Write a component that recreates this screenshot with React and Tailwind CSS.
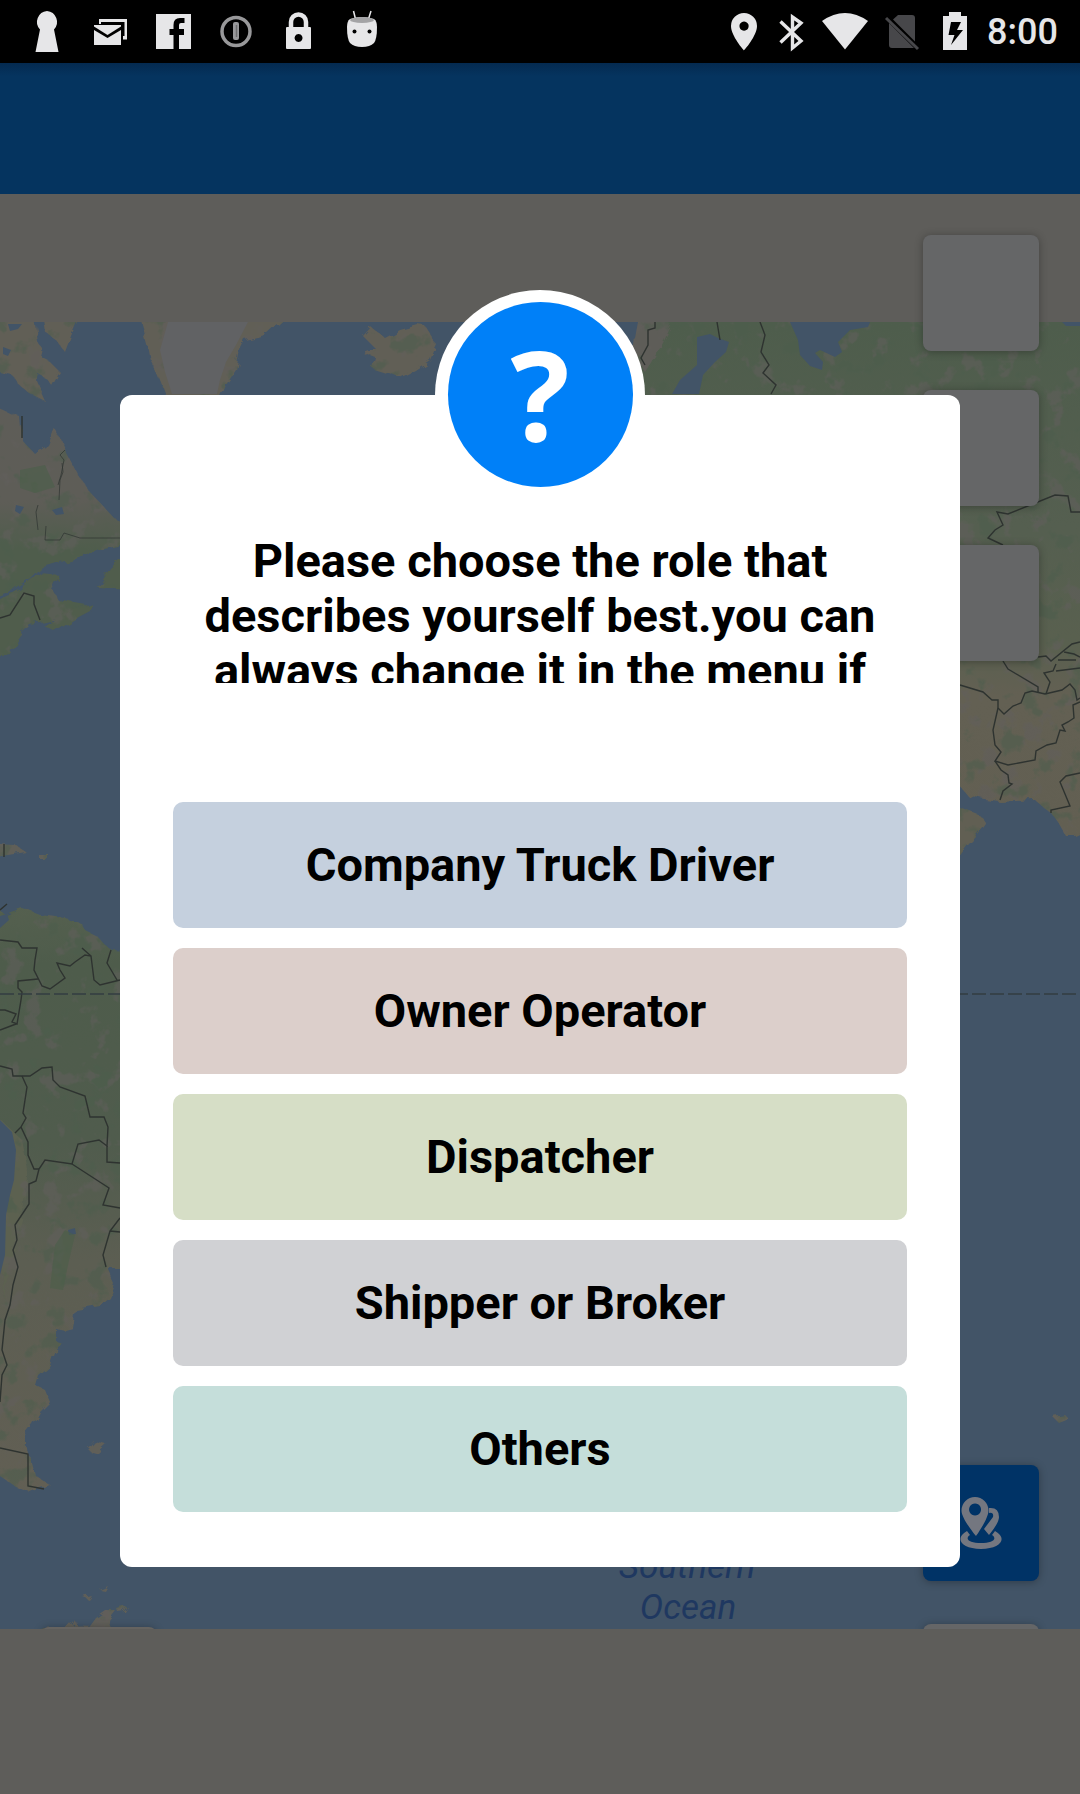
import React from "react";

const roles = [
  { label: "Company Truck Driver", color: "bg-[#c5d0de]" },
  { label: "Owner Operator", color: "bg-[#dccfcb]" },
  { label: "Dispatcher", color: "bg-[#d6dec6]" },
  { label: "Shipper or Broker", color: "bg-[#d0d1d4]" },
  { label: "Others", color: "bg-[#c5deda]" },
];

function Glyph({ x, w, children }) {
  return (
    <svg width={w} height="63" viewBox={`${x} 0 ${w} 63`} fill="#e6e6e8" aria-hidden="true">
      {children}
    </svg>
  );
}

function StatusBar() {
  return (
    <div className="flex h-[63px] w-full items-center justify-between bg-black pr-[22px] pl-4">
      <div className="flex">
        <Glyph x={16} w={63}>
          <path d="M47 11a11 11 0 0 1 7 18.500L58.500 52h-23L40 29.500A11 11 0 0 1 47 11Z" />
        </Glyph>
        <Glyph x={79} w={63}>
          <path d="M99 19h28v20.500h-4V36h1.500V22H101v2h-2Z" />
          <path d="M94 25h27v1.500L107.500 35 94 26.500Z" />
          <path d="M94 30l13.500 8L121 30v15H94Z" />
        </Glyph>
        <Glyph x={142} w={63}>
          <path d="M156 14h35v35h-12V35h5v-6h-5v-4q0-2 2-2h3.500v-5H180q-6.500 0-6.500 7v4h-4v6h4v14H156Z" />
        </Glyph>
        <Glyph x={205} w={63}>
          <circle cx="236" cy="31.500" r="14" fill="none" stroke="#98989a" strokeWidth="3.500" />
          <rect x="233" y="22" width="6" height="18" rx="2" fill="#98989a" />
          <path d="M236.500 25v12" stroke="#6c6c6e" strokeWidth="1.500" />
        </Glyph>
        <Glyph x={268} w={63}>
          <path d="M291 28v-6a7.500 7.500 0 0 1 15 0v6" fill="none" stroke="#e6e6e8" strokeWidth="4.500" />
          <path fillRule="evenodd" d="M287 27h23q1 0 1 1v20q0 1-1 1h-23q-1 0-1-1V28q0-1 1-1Zm11.500 7a4 4 0 1 0 .1 0Z" />
        </Glyph>
        <Glyph x={331} w={63}>
          <path d="M353.500 11l2 8M371 11l-2.500 8" stroke="#e6e6e8" strokeWidth="1.500" />
          <path d="M347 27q0-6 3-8 12-4 24 0 3 2 3 8 0 12-3 16-4 4-12 4t-12-4q-3-4-3-16Z" />
          <ellipse cx="362" cy="20" rx="12" ry="3" fill="#a3a3a5" />
          <circle cx="354.500" cy="31.500" r="2" fill="#000" />
          <circle cx="369.500" cy="31.500" r="2" fill="#000" />
        </Glyph>
      </div>
      <div className="flex items-center">
        <Glyph x={722} w={44}>
          <path fillRule="evenodd" d="M744 13a13 13 0 0 1 13 13c0 10-13 24.500-13 24.500S731 36 731 26a13 13 0 0 1 13-13Zm0 8.500a4.600 4.600 0 1 0 .1 0Z" />
        </Glyph>
        <Glyph x={766} w={52}>
          <path d="M780.500 21.500L801 41l-8.500 7V17l8.500 6-20.500 19.500" fill="none" stroke="#e6e6e8" strokeWidth="3.400" />
        </Glyph>
        <Glyph x={818} w={54}>
          <path d="M822 21q23-16 46 0L845 49.500Z" />
        </Glyph>
        <Glyph x={872} w={58}>
          <path d="M898 15h14q3 0 3 3v23.500L893 19.500ZM889 23l25 25h-22q-3 0-3-3Z" fill="#47474a" />
          <path d="M886 18l32 31" stroke="#47474a" strokeWidth="3" />
        </Glyph>
        <Glyph x={930} w={50}>
          <path fillRule="evenodd" d="M949 12h12v4h6v34h-24V16h6Zm2 10l-2.500 13h6L951 45l12-15h-6l4-8Z" />
        </Glyph>
        <time className="w-[78px] pl-[7px] text-[36px] leading-none font-medium text-[#e6e6e8]">8:00</time>
      </div>
    </div>
  );
}

function WorldMap() {
  return (
    <svg className="block h-auto w-full" viewBox="0 322 1080 1307" aria-label="World map" role="img">
      <defs>
        <filter id="coast" x="0" y="0" width="100%" height="100%" colorInterpolationFilters="sRGB">
          <feTurbulence type="fractalNoise" baseFrequency="0.080" numOctaves="3" seed="4" result="n" />
          <feDisplacementMap in="SourceGraphic" in2="n" scale="9" result="land" />
          <feTurbulence type="fractalNoise" baseFrequency="0.045" numOctaves="4" seed="9" result="m" />
          <feColorMatrix in="m" values="0 0 0 0 0.380  0 0 0 0 0.370  0 0 0 0 0.360  9 0 0 0 -5.2" result="grey" />
          <feColorMatrix in="m" values="0 0 0 0 0.300  0 0 0 0 0.365  0 0 0 0 0.300  0 8 0 0 -4.7" result="green" />
          <feMerge result="spots">
            <feMergeNode in="grey" />
            <feMergeNode in="green" />
          </feMerge>
          <feComponentTransfer in="spots" result="soft">
            <feFuncA type="linear" slope="0.550" />
          </feComponentTransfer>
          <feComposite in="soft" in2="land" operator="atop" />
        </filter>
        <linearGradient id="america" x1="0" y1="905" x2="0" y2="1500" gradientUnits="userSpaceOnUse">
          <stop offset="0" stopColor="#55604f" />
          <stop offset="0.100" stopColor="#4e5c4b" />
          <stop offset="0.400" stopColor="#505c4d" />
          <stop offset="0.600" stopColor="#5c5e52" />
          <stop offset="1" stopColor="#625f54" />
        </linearGradient>
        <linearGradient id="canada" x1="0" y1="400" x2="0" y2="600" gradientUnits="userSpaceOnUse">
          <stop offset="0" stopColor="#5e5d58" />
          <stop offset="0.500" stopColor="#5e5d57" />
          <stop offset="0.750" stopColor="#4f5d4c" />
          <stop offset="1" stopColor="#4f5d4c" />
        </linearGradient>
        <linearGradient id="asia" x1="0" y1="322" x2="0" y2="840" gradientUnits="userSpaceOnUse">
          <stop offset="0" stopColor="#4e5d4c" />
          <stop offset="0.400" stopColor="#555f50" />
          <stop offset="0.620" stopColor="#59604f" />
          <stop offset="0.720" stopColor="#636053" />
          <stop offset="1" stopColor="#625f52" />
        </linearGradient>
      </defs>
      <rect x="0" y="322" width="1080" height="1307" fill="#425467" />

      <g filter="url(#coast)">
        <g fill="#615f56">
          <path d="M-9 312H33L38 342 44 350 42 358 50 362 60 372 52 386 46 378 38 374 36 380 46 402 30 394 18 384 12 375-9 370Z" />
          <path d="M42 312H80L70 335 64 351 56 340 45 332Z" />
          <path d="M138 312H290L265 335 245 340 240 350 236 370 226 385 220 400H168L158 375 150 360 147 345Z" />
          <path d="M362 335L370 326 385 338 400 330 418 325 425 326 437 345 430 360 415 370 400 378 385 372 372 368 375 357 362 352 375 348Z" />
        </g>
        <path fill="url(#canada)" d="M-9 404L15 415 20 417 22 440 35 454 48 445 55 428 60 438 65 450 78 475 82 480 90 492 105 508 114 518 130 524V543L100 550 80 558 60 562 40 568 30 578 15 588-9 597Z" />
        <path fill="#505d4c" d="M-9 602L20 588 40 573 60 575 52 590 58 600 75 603 86 605 70 612 60 618 46 622 30 625 20 635 10 650 12 654-9 656Z" />
        <path fill="#505d4c" d="M45 627L60 615 75 609 92 603 90 611 75 619 55 632ZM98 588L110 568 130 550V590Z" />
        <path fill="url(#asia)" d="M640 312H1100V825L1075 836 1066 836 1058 822 1052 814 1035 800 1000 802 985 800 968 796 955 780 900 700V500L620 420Z" />
        <path fill="#5e5d58" d="M635 312H678L662 345 645 372 630 350Z" />
        <path fill="#615f53" d="M940 800L970 811 980 815 986 824 978 835 968 845 955 862Z" />
        <path fill="url(#america)" d="M-9 905L5 914 22 908 40 915 65 918 80 922 85 930 97 936 105 945 112 950 140 952V1268H107L115 1285 110 1298 100 1306 76 1310 73 1328 65 1330 55 1328 55 1340 63 1345 54 1352 50 1365 38 1375 35 1385 45 1390 50 1402 40 1412 33 1425 25 1435 25 1445 30 1455 35 1475 50 1485 40 1488 30 1492 15 1486-9 1470Z" />
        <g fill="#605f58">
          <path d="M-4 844L15 845 26 852-4 857ZM38 854h10v4h-10ZM88 1450L95 1442 107 1445 98 1453ZM1052 1416l12-2 4 4-10 4ZM100 1590l8-4-3 5ZM84 1598l8-2-3 4ZM84 1632L95 1617 105 1610 115 1610 108 1619 112 1632ZM118 1610l10-3-3 5-6 1ZM70 1632l6-11 3 11Z" />
          <path d="M40 1629q30-6 72-2v6H40Z" />
        </g>
        <path fill="#5c6150" d="M1 1120L22 1140 28 1170 22 1220 10 1260 4 1300 0 1190Z" />
      </g>

      <path fill="#616264" d="M168 322H248L236 345 226 362 220 380 217 394H172L165 372 160 350Z" />
      <g fill="#425467">
        <path d="M697 337L710 334 718 338 729 342 726 352 715 362 703 375 699 394H672L680 380 697 365Z" />
        <path d="M790 322H870L868 327 850 330 838 342 842 352 835 357 820 350 815 353 823 362 822 370 810 366 800 355 798 340Z" />
        <path d="M0 1120L12 1132 16 1150 14 1180 10 1195 6 1215 5 1255 0 1275ZM0 916l7-2 2 6-9 8Z" />
        <path d="M8 324l14 0-4 5-8 2ZM3 347l8 3-3 6-5-2ZM16 505l8 2-4 7-5-3ZM52 510l10-3 2 7-8 1ZM1062 322h18v4h-14ZM68 1230l7-2 1 6-7 1ZM620 322h18l-3 16-6 6Z" />
      </g>
      <path fill="#4b5f4a" opacity="0.600" d="M55 1245l10-15 10 5-7 30-5 25-13-2ZM20 470l25-5 10 22-20 6-15-5Z" />

      <g fill="none" stroke="#2e3330" strokeWidth="1.400">
        <path d="M655 322V328L648 330V345L641 358 645 365M717 322L720 340M760 322L765 335 761 352 769 365 763 373 776 385 771 394" />
        <path d="M1003 545L988 538 995 530 1003 525 997 512 1008 514 1055 495 1068 496 1071 512H1080" />
        <path d="M1003 661L1008 669 1038 687V693M1038 657L1046 656 1051 661 1072 644 1080 642M1064 652l10 2 6 3M1058 660h18M1056 671l24-3" />
        <path d="M960 685L983 692 992 700H998V708L1004 714 1013 706 1021 703 1025 693 1032 691 1045 694 1062 690 1070 684 1075 690 1077 700 1080 698" />
        <path d="M998 708L993 730 995 745 1001 752 995 761 1008 765 1035 760 1036 751 1047 745 1056 743 1060 730 1065 731 1062 725 1068 722 1074 718 1073 705 1080 702" />
        <path d="M995 761L1001 770 1008 775 1009 783 1012 784 1003 791 1000 800M1080 773L1066 776 1060 782 1070 806 1051 810V813M1046 694L1050 682 1044 673 1053 671 1056 664" />
        <path d="M0 618L10 615 24 593 34 596V604L40 620M22 416V438" />
        <path strokeWidth="0.700" d="M65 450L60 455 64 460 61 475 58 485M62 463L63 472 60 480 59 500M38 505L36 512 38 530M46 526L45 540H60L64 533 80 538H120" />
        <path d="M0 940L18 942 22 948H37L35 960 34 970 38 978 42 986 50 989 65 978 60 970 57 963 70 966 75 962 85 955 91 956 94 980 100 985 120 980M91 956L82 948M111 950L107 963 117 980" />
        <path d="M38 979L18 981V988L22 992 21 1000 17 1024 12 1022 16 1014 5 1010H0M0 1030L16 1024" />
        <path d="M0 1066L12 1069 13 1076H30L42 1068 52 1067 53 1080 60 1087 85 1096 90 1117H104L108 1127 107 1146 99 1140 78 1144 72 1164 45 1160 39 1169 36 1181 29 1184V1204L15 1225 17 1240 13 1250 18 1267 13 1285 10 1305 5 1320 2 1350 7 1365 2 1375 0 1402" />
        <path d="M22 1076L27 1087 23 1113 26 1118 21 1127 28 1142V1155L34 1169H39M21 1127L15 1133M107 1146V1162L120 1163M72 1164L109 1188 103 1205 120 1208M120 1218L110 1231 103 1255 106 1267M110 1231L120 1232" />
        <path d="M0 1448L28 1454V1486L44 1489M4 844V857M0 910L7 904" />
      </g>
      <path d="M0 994H1080" stroke="#333d42" strokeWidth="1.400" strokeDasharray="14 4" />

      <g fill="#1f3860" fontFamily="Roboto, sans-serif" fontStyle="italic" fontSize="35" textAnchor="middle">
        <text x="687" y="1578">Southern</text>
        <text x="688" y="1619">Ocean</text>
      </g>
    </svg>
  );
}

const controlStyle = "block h-[116px] w-[116px] rounded-lg shadow-[0_1px_8px_rgba(0,0,0,0.3)]";

function MapPane() {
  return (
    <div className="relative overflow-hidden pt-32">
      <WorldMap />
      <div className="absolute top-[41px] right-[41px] flex flex-col gap-[39px]">
        <button aria-label="Map layers" className={`${controlStyle} bg-[#656667]`} />
        <button aria-label="Map filters" className={`${controlStyle} bg-[#656667]`} />
        <button aria-label="Map search" className={`${controlStyle} bg-[#656667]`} />
      </div>
      <div className="absolute right-[41px] -bottom-[111px] flex flex-col gap-[43px]">
        <button aria-label="Nearby places" className={`${controlStyle} flex items-center justify-center bg-[#003366]`}>
          <svg width="48" height="52" viewBox="-2 0 44 52" preserveAspectRatio="xMinYMid" fill="#747780" aria-hidden="true">
            <path d="M8 34C-5 41 2 52 22 52S49 41 36 34l-3 4c6 4 0 8-11 8S5 42 11 38Z" />
            <path d="M30 11q10-1 10 9 0 6-10 18l-5-6 9-12q1-5-4-4Z" />
            <path fillRule="evenodd" d="M16 0a13.500 13.500 0 0 1 13.500 13.500C29.500 22 17 39 17 39S2.500 22 2.500 13.500A13.500 13.500 0 0 1 16 0Zm0 6.500a6 6 0 1 0 .1 0Z" />
          </svg>
        </button>
        <button aria-label="Locate me" className={`${controlStyle} bg-[#656667]`} />
      </div>
      <button aria-label="Menu" className={`${controlStyle} absolute -bottom-[114px] left-[41px] bg-[#656360]`} />
    </div>
  );
}

function RoleDialog() {
  return (
    <div
      role="dialog"
      aria-modal="true"
      aria-labelledby="role-title"
      className="relative mt-[105px] w-7/9 rounded-xl bg-white px-[53px] pt-[138px] pb-[55px]"
    >
      <div className="absolute -top-[105px] left-1/2 flex h-[210px] w-[210px] -translate-x-1/2 items-center justify-center rounded-full bg-white">
        <div className="flex h-[185px] w-[185px] items-center justify-center rounded-full bg-[#0080f8] pb-1">
          <span className="font-['Open_Sans'] text-[124px] leading-none font-bold text-white">?</span>
        </div>
      </div>
      <h1 id="role-title" className="h-[150px] overflow-hidden text-center text-[47px] leading-[55px] font-bold text-black">
        Please choose the role that describes yourself best.you can always change it in the menu if
      </h1>
      <div className="mt-[119px] flex flex-col gap-5">
        {roles.map((role) => (
          <button
            key={role.label}
            className={`h-[126px] w-full rounded-[10px] text-[47px] leading-[55px] font-bold text-black ${role.color}`}
          >
            {role.label}
          </button>
        ))}
      </div>
    </div>
  );
}

export default function App() {
  return (
    <div className="relative flex min-h-screen w-full flex-col bg-[#5e5d5a] font-[Roboto,sans-serif]">
      <StatusBar />
      <header className="h-[131px] bg-[#05345f] bg-linear-to-b from-[#042a50] to-[#05345f] to-10%" />
      <main className="flex-1">
        <MapPane />
      </main>
      <div className="absolute inset-x-0 top-[63px] bottom-0 flex items-center justify-center pb-px">
        <RoleDialog />
      </div>
    </div>
  );
}
